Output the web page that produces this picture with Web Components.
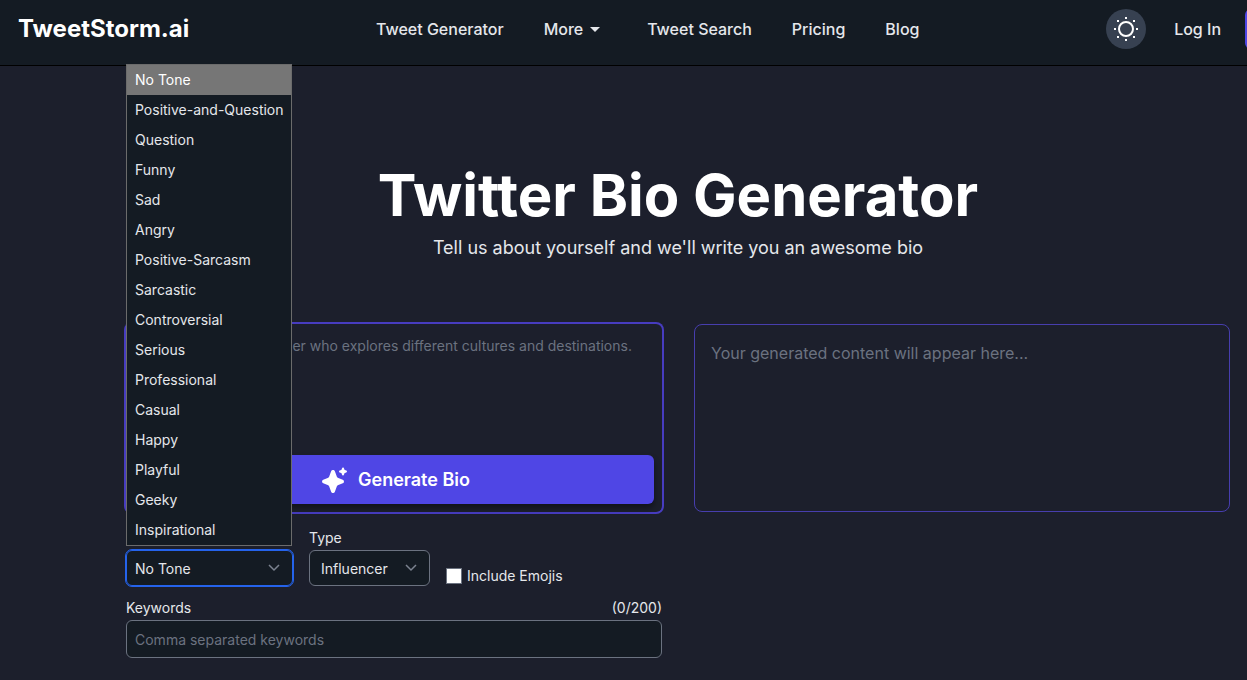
<!DOCTYPE html>
<html lang="en">
<head>
<meta charset="utf-8">
<meta name="viewport" content="width=device-width, initial-scale=1">
<title>Twitter Bio Generator</title>
<style>
  :root {
    --page: #1c1f2c;
    --panel: #141b23;
    --field: #141b23;
    --line: #6b7280;
    --muted: #6b7280;
    --text: #e5e7eb;
    --accent: #4f46e5;
  }
  html, body { margin: 0; min-height: 100%; background: var(--page); }
  body { font-family: Inter, "Liberation Sans", sans-serif; font-size: 14px; line-height: 20px; color: var(--text); overflow-x: hidden; }
</style>
</head>
<body>
<storm-header></storm-header>
<bio-page>
  <bio-hero>
    <span slot="title">Twitter Bio Generator</span>
    <span slot="lead">Tell us about yourself and we'll write you an awesome bio</span>
  </bio-hero>
  <bio-form></bio-form>
  <bio-output>Your generated content will appear here...</bio-output>
</bio-page>

<script>
function define(name, html, setup) {
  const template = document.createElement('template');
  template.innerHTML = html;
  customElements.define(name, class extends HTMLElement {
    constructor() {
      super();
      this.attachShadow({ mode: 'open' }).append(template.content.cloneNode(true));
    }
    connectedCallback() { if (setup) setup(this, this.shadowRoot); }
  });
}

define('storm-header', `
<style>
  :host { display: block; background: var(--panel); border-bottom: 1px solid #000; overflow: hidden; }
  header { display: flex; justify-content: space-between; align-items: center; padding: 9px 0 16px 18px; height: 40px; font-size: 16px; font-weight: 500; line-height: 24px; }
  a { color: var(--text); text-decoration: none; white-space: nowrap; }
  .logo { font-size: 24px; font-weight: 700; color: #fff; }
  nav { display: flex; gap: 40px; }
  .more { display: flex; align-items: center; gap: 7px; padding: 0 7px 0 0; border: 0; background: none; font: inherit; color: var(--text); }
  .actions { display: flex; align-items: center; }
  .theme { width: 40px; height: 40px; padding: 8px; border: 0; border-radius: 50%; background: #374151; margin-right: 28px; }
  .theme svg { display: block; }
  .signup { width: 96px; height: 40px; border-radius: 6px; background: var(--accent); margin: 0 -94px 0 24px; }
</style>
<header>
  <a class="logo" href="#">TweetStorm.ai</a>
  <nav>
    <a href="#">Tweet Generator</a>
    <button class="more" type="button">More
      <svg width="10" height="5" viewBox="0 0 10 5"><path d="M0 0h10L5 5z" fill="currentColor"/></svg>
    </button>
    <a href="#">Tweet Search</a>
    <a href="#">Pricing</a>
    <a href="#">Blog</a>
  </nav>
  <div class="actions">
    <button class="theme" type="button" aria-label="Theme">
      <svg width="24" height="24" viewBox="0 0 24 24" fill="#fff">
        <circle cx="12" cy="12" r="7" fill="none" stroke="#fff" stroke-width="2"/>
        <path d="M11 0h2v2h-2zM11 22h2v2h-2zM0 11h2v2H0zM22 11h2v2h-2zM3 3h2v2H3zM19 3h2v2h-2zM3 19h2v2H3zM19 19h2v2h-2z"/>
      </svg>
    </button>
    <a href="#">Log In</a>
    <a class="signup" href="#" aria-label="Register"></a>
  </div>
</header>`);

define('bio-page', `
<style>
  :host { display: block; padding: 99px 17px 20px 126px; }
  main { display: grid; grid-template-columns: 1fr 1fr; column-gap: 32px; align-items: start; }
  ::slotted(bio-hero) { grid-column: 1 / -1; }
</style>
<main><slot></slot></main>`);

define('bio-hero', `
<style>
  :host { display: block; text-align: center; margin-bottom: 62px; }
  h1 { margin: 0 0 9px; font-size: 58px; line-height: 60px; font-weight: 700; color: #fff; }
  p { margin: 0; font-size: 18px; line-height: 28px; }
</style>
<h1><slot name="title"></slot></h1>
<p><slot name="lead"></slot></p>`);

define('bio-output', `
<style>
  :host { display: block; box-sizing: border-box; min-height: 188px; padding: 16px; border: 1px solid #473eae; border-radius: 8px; font-size: 16px; line-height: 24px; color: var(--muted); }
</style>
<slot></slot>`);

define('bio-prompt', `
<style>
  :host { display: flex; flex-direction: column; box-sizing: border-box; height: 188px; padding: 8px; border-radius: 6px; box-shadow: 0 0 0 2px #473cc0; }
  textarea { flex: 1; border: 0; padding: 4px 8px; margin: 0; background: none; resize: none; outline: 0; color: var(--text); font: 14px/20px Inter, sans-serif; overflow: hidden; }
  textarea::placeholder { color: var(--muted); opacity: 1; }
  button { display: flex; flex: none; align-items: center; justify-content: center; gap: 10px; height: 49px; padding: 0; border: 0; border-radius: 6px; background: var(--accent); color: #fff; font: 600 18px/28px Inter, sans-serif; box-shadow: 0 4px 6px rgba(0,0,0,.4); }
</style>
<textarea aria-label="About you" placeholder="e.g. I am a travel blogger who explores different cultures and destinations."></textarea>
<button type="submit">
  <svg width="30" height="30" viewBox="0 0 30 30" fill="#fff" stroke="#fff" stroke-linejoin="round">
    <path stroke-width="4" d="M15 7l2 5.500q.5 1.500 2 2l5 2-5 2q-1.500.5-2 2l-2 5.500-2-5.500q-.5-1.500-2-2l-5-2 5-2q1.500-.5 2-2z"/>
    <path stroke-width="2" d="M25 3.500l.8 2.200 2.200.8-2.200.8-.8 2.200-.8-2.200L22 6.500l2.200-.8z"/>
  </svg>
  Generate Bio
</button>`);

define('bio-select', `
<style>
  :host { display: grid; gap: 2px; position: relative; }
  .box { display: grid; align-items: center; }
  select, svg { grid-area: 1 / 1; }
  select { appearance: none; width: 100%; height: 36px; margin: 0; padding: 2px 40px 0 var(--pad, 11px); border: 1px solid var(--line); border-radius: 6px; background: var(--field); color: var(--text); font: 14px/20px Inter, sans-serif; }
  :host([open]) select { border-color: #2563eb; outline: 1px solid #2563eb; }
  svg { justify-self: end; margin-right: 13px; pointer-events: none; }
</style>
<label for="field"></label>
<div class="box">
  <select id="field"></select>
  <svg width="12" height="8" viewBox="0 0 12 8" fill="none" stroke="#7b8290" stroke-width="1.500"><path d="M1 1l5 5 5-5"/></svg>
</div>
<slot></slot>`, (host, root) => {
  const name = host.getAttribute('label');
  const select = root.querySelector('select');
  // An open menu covers the label, so the name moves to the control itself.
  if (host.hasAttribute('open')) select.setAttribute('aria-label', name);
  else root.querySelector('label').textContent = name;
  const option = document.createElement('option');
  option.textContent = host.getAttribute('value');
  select.replaceChildren(option);
});

define('bio-menu', `
<style>
  :host { position: absolute; left: 0; bottom: 40px; z-index: 2; border: 1px solid #6b6b6b; background: var(--field); white-space: nowrap; }
  ul { margin: 0; padding: 0; list-style: none; }
  li { padding: 5px 7px 5px 8px; }
  li[aria-selected=true] { background: #767676; color: #fff; }
</style>
<ul role="listbox" aria-label="Tone"></ul>`, (host, root) => {
  const tones = ['No Tone', 'Positive-and-Question', 'Question', 'Funny', 'Sad', 'Angry', 'Positive-Sarcasm', 'Sarcastic', 'Controversial', 'Serious', 'Professional', 'Casual', 'Happy', 'Playful', 'Geeky', 'Inspirational'];
  root.querySelector('ul').replaceChildren(...tones.map((tone, i) => {
    const li = document.createElement('li');
    li.setAttribute('role', 'option');
    li.setAttribute('aria-selected', String(i === 0));
    li.textContent = tone;
    return li;
  }));
});

define('bio-form', `
<style>
  :host { display: block; }
  .row { display: flex; align-items: end; gap: 16px; margin: 16px 0 12px; }
  .tone { width: 167px; --pad: 8px; }
  .type { width: 121px; }
  .check { display: flex; align-items: center; gap: 5px; }
  .check input { appearance: none; width: 16px; height: 16px; margin: 0; background: #fff; border: 1px solid var(--line); }
  .check input:checked { background: var(--accent); }
  .head { display: flex; justify-content: space-between; margin-bottom: 2px; }
  .keywords { display: block; box-sizing: border-box; width: 100%; height: 38px; padding: 0 8px; border: 1px solid var(--line); border-radius: 6px; background: var(--field); color: var(--text); font: 14px/20px Inter, sans-serif; }
  .keywords::placeholder { color: var(--muted); opacity: 1; }
</style>
<form>
  <bio-prompt></bio-prompt>
  <div class="row">
    <bio-select class="tone" label="Tone" value="No Tone" open><bio-menu></bio-menu></bio-select>
    <bio-select class="type" label="Type" value="Influencer"></bio-select>
    <label class="check"><input type="checkbox">Include Emojis</label>
  </div>
  <div class="head"><label for="keywords">Keywords</label><span>(0/200)</span></div>
  <input class="keywords" id="keywords" placeholder="Comma separated keywords">
</form>`);
</script>
</body>
</html>
